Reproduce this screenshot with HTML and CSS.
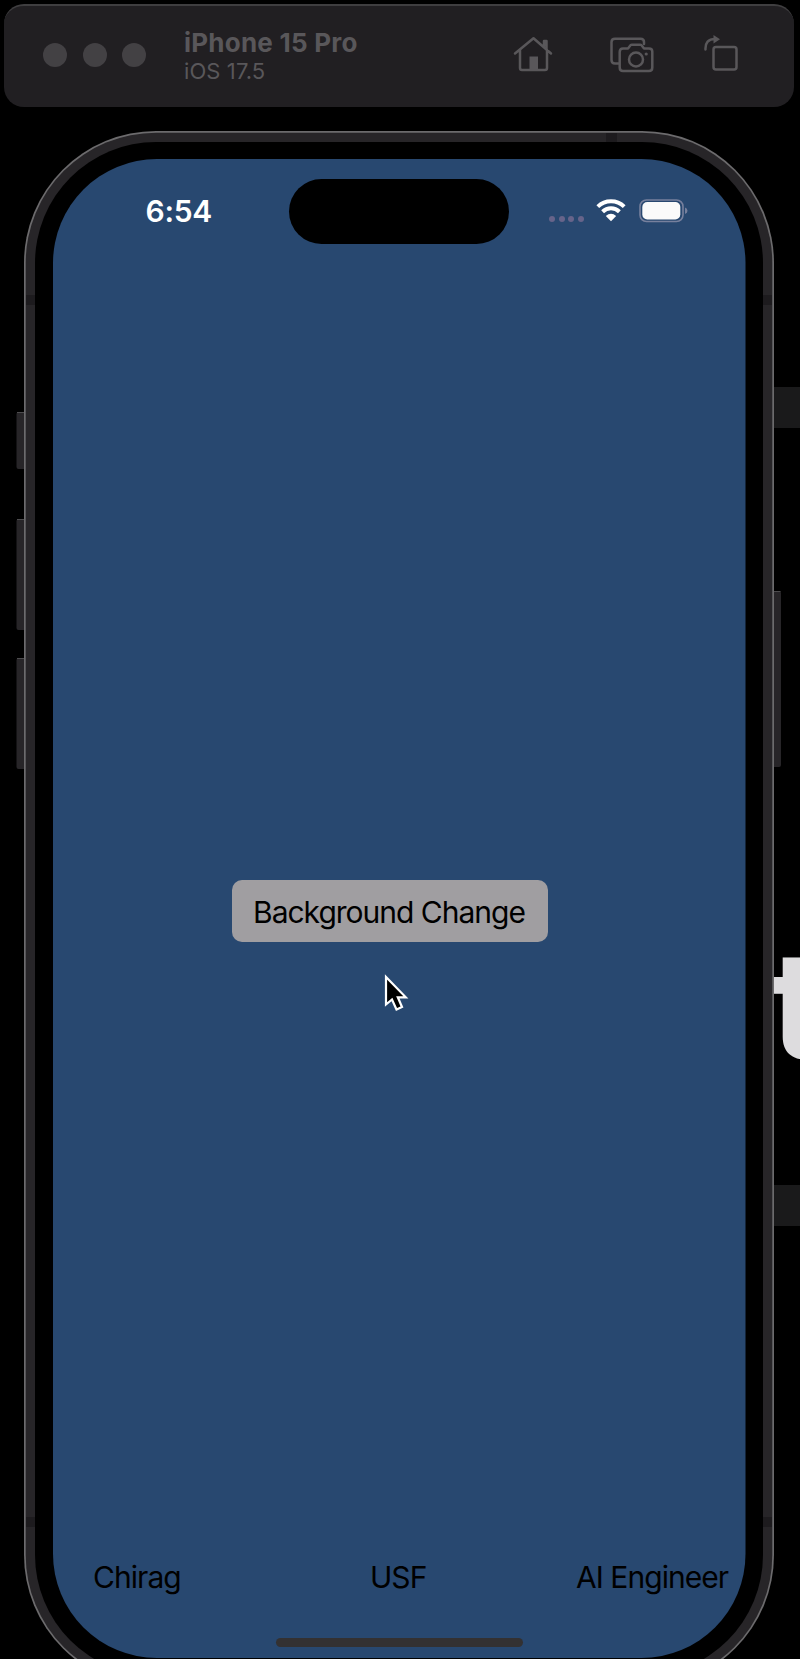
FILE: index.html
```html
<!DOCTYPE html>
<html lang="en">
<head>
<meta charset="utf-8">
<title>iPhone 15 Pro</title>
<link rel="stylesheet" href="styles.css">
</head>
<body>
<div class="backdrop">
  <div class="band band-top"></div>
  <div class="band band-bottom"></div>
  <div class="headline">t</div>
</div>
<header class="toolbar">
  <div class="dots"><i></i><i></i><i></i></div>
  <div class="device-name">
    <strong>iPhone 15 Pro</strong>
    <span>iOS 17.5</span>
  </div>
  <div class="tools">
    <svg class="tool" width="40" height="38" viewBox="0 0 40 38">
      <path d="M2 18.5L20.5 3.2L38 18.5M7 15V33Q7 35 9 35H32Q34 35 34 33V15M31 11V6H33.5V14"/>
      <path class="solid" d="M16.5 21.5H25V35H16.5Z"/>
    </svg>
    <svg class="tool camera" width="44" height="38" viewBox="0 0 44 38">
      <path d="M8.500 28.500H5Q1.500 28.500 1.500 25V7Q1.500 3.700 5 3.700H30.500Q34 3.700 34 7V9"/>
      <path d="M13 13.500H18L20.500 10.300Q21 9.700 22 9.700H30Q31 9.700 31.500 10.300L34 13.500H39Q42.300 13.500 42.300 16.500V32.500Q42.300 36 39 36H13Q9.700 36 9.700 32.500V17Q9.700 13.500 13 13.500Z"/>
      <circle cx="26" cy="24.500" r="7"/>
      <circle class="solid" cx="36.200" cy="19" r="1.600"/>
    </svg>
    <svg class="tool" width="34" height="38" viewBox="0 0 34 38">
      <path d="M1.500 14.500Q1 4 11 4"/>
      <path class="solid" d="M9.500 0L16 4.300L9.500 8.500Z"/>
      <rect x="9.500" y="12" width="23" height="22.500" rx="2.500"/>
    </svg>
  </div>
</header>
<main class="phone">
  <svg class="chassis" width="800" height="1659" viewBox="0 0 800 1659">
    <g class="side-buttons">
      <rect x="16.500" y="412" width="12" height="57" rx="2"/>
      <rect x="16.500" y="519" width="12" height="111" rx="2"/>
      <rect x="16.500" y="658" width="12" height="111" rx="2"/>
      <rect x="769" y="591" width="12" height="176" rx="2"/>
    </g>
    <path class="button-edge" d="M17 412.500H25M17 519.500H25M17 658.500H25M773 591.500H780.500"/>
    <rect class="rim" x="24" y="131" width="750" height="1556" rx="132"/>
    <rect class="band-metal" x="25.700" y="132.700" width="746.600" height="1552.600" rx="130.300"/>
    <path class="antenna" d="M26 295H36V305H26ZM762 295H772V305H762ZM26 1517H36V1527H26ZM762 1517H772V1527H762ZM606 133H617V142H606Z"/>
    <rect class="bezel" x="35" y="142" width="728" height="1534" rx="121"/>
    <rect class="display" x="53" y="159" width="692.500" height="1499" rx="104"/>
  </svg>
  <section class="screen">
    <div class="status">
      <time>6:54</time>
      <div class="island"></div>
      <div class="indicators">
        <div class="signal"><i></i><i></i><i></i><i></i></div>
        <svg class="wifi" width="30" height="23" viewBox="0 0 30 23">
          <path d="M1.800 7.600A19 19 0 0 1 28.200 7.600M6.600 12.700A12 12 0 0 1 23.400 12.700"/>
          <path class="tip" d="M9.800 17Q15 12.500 20.200 17L15 22.300Z"/>
        </svg>
        <svg class="battery" width="49" height="24" viewBox="0 0 49 24">
          <rect class="case" x="1" y="1" width="43" height="21.500" rx="6.500"/>
          <rect class="charge" x="3.300" y="3" width="38" height="17.500" rx="5"/>
          <path class="nub" d="M46 8.500Q48.500 9.500 48.500 11.800Q48.500 14 46 15Z"/>
        </svg>
      </div>
    </div>
    <div class="stage"><button class="change">Background Change</button></div>
    <footer class="labels"><span>Chirag</span><span>USF</span><span>AI Engineer</span></footer>
    <div class="home"></div>
  </section>
</main>
<svg class="pointer" width="28" height="42" viewBox="0 0 28 42">
  <path d="M2 4V31.500L8 26.500L12.500 36.500L18 34L13.800 24.300H21.800Z"/>
</svg>
</body>
</html>
```
FILE: styles.css
```css
* { box-sizing: border-box; }
html, body { margin: 0; height: 1659px; overflow: hidden; background: #000; }
body { position: relative; width: 800px; padding: 4px 6px 0 4px; font-family: Inter, "Liberation Sans", sans-serif; }

.backdrop { position: absolute; top: 0; left: 774px; width: 26px; height: 1659px; overflow: hidden; }
.band { position: absolute; width: 100%; height: 41px; background: #1a1a1b; }
.band-top { top: 387px; }
.band-bottom { top: 1185px; }
.headline { position: absolute; left: -4px; top: 915px; font-size: 150px; line-height: 180px; font-weight: 700; color: #dddcde; }

.toolbar { display: flex; align-items: center; height: 103px; padding: 0 56px 0 39px; border-radius: 20px; border-top: 2px solid #3f3e40; background: #211f22; color: #59575a; }
.dots { display: flex; gap: 15.500px; margin-top: -3px; }
.dots i { width: 24px; height: 24px; border-radius: 50%; background: #434144; }
.device-name { display: flex; flex-direction: column; margin-left: 38px; margin-top: -1px; }
.device-name strong { font-size: 26px; line-height: 31px; font-weight: 700; letter-spacing: 0.230px; }
.device-name span { font-size: 22px; line-height: 27px; letter-spacing: 0.100px; }
.tools { display: flex; margin-left: auto; margin-top: -6px; }
.tool { fill: none; stroke: #59575a; stroke-width: 2.500; stroke-linecap: round; stroke-linejoin: round; }
.tool .solid { fill: #59575a; stroke: none; }
.camera { margin: 0 50px 0 57px; }

.chassis { position: absolute; left: 0; top: 0; }
.side-buttons { fill: #272528; }
.button-edge { stroke: #4d4c4e; }
.rim { fill: #6c6b6d; }
.band-metal { fill: #272528; }
.antenna { fill: #1d1b1e; }
.bezel { fill: #000; }
.display { fill: #284870; }

.screen { position: relative; display: flex; flex-direction: column; width: 693px; height: 1499px; margin: 52px 0 0 49px; }
.status { display: grid; grid-template-columns: 236px 220px 1fr; align-items: center; height: 64px; margin-top: 20px; }
.status time { padding-left: 92.500px; margin-top: -2px; font-size: 30px; line-height: 36px; font-weight: 600; letter-spacing: -0.300px; color: #fff; }
.island { height: 65px; border-radius: 33px; background: #000; }
.indicators { display: flex; align-items: center; padding-left: 40px; margin-top: -2px; }
.signal { display: flex; gap: 3.500px; margin-top: 16px; }
.signal i { width: 6px; height: 6px; border-radius: 50%; background: #67648a; }
.wifi { margin-left: 12px; fill: none; stroke: #fff; stroke-width: 4; }
.wifi .tip { fill: #fff; stroke: none; }
.battery { margin-left: 13px; }
.battery .case { fill: none; stroke: #77809d; stroke-width: 1.600; }
.battery .charge { fill: #fafafa; }
.battery .nub { fill: #77809d; }

.stage { display: flex; flex: 1; align-items: flex-start; padding: 637px 0 0 179px; }
.change { width: 316px; height: 62px; padding: 1px 2px 0 0; border: 0; border-radius: 10px; background: #a09ea1; color: #000; font-family: inherit; font-size: 30px; letter-spacing: -1px; }
.labels { display: grid; grid-template-columns: 277px 206px 1fr; padding-left: 40px; margin-bottom: 43px; font-size: 30px; line-height: 36px; color: #000; letter-spacing: -0.950px; white-space: nowrap; }
.home { width: 247px; height: 9px; margin: 0 0 11px 223px; border-radius: 5px; background: #333132; }

.pointer { position: absolute; left: 384px; top: 973px; fill: #000; stroke: #fff; stroke-width: 2.200; }
```
